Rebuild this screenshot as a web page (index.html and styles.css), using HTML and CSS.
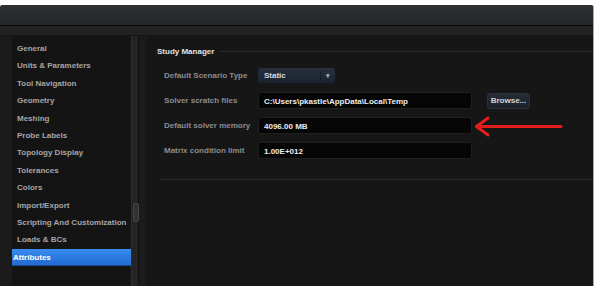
FILE: index.html
```html
<!DOCTYPE html>
<html lang="en">
<head>
  <meta charset="UTF-8" />
  <title>Options</title>
  <link rel="stylesheet" href="styles.css">
</head>
<body>
  <div class="window">
    <div class="titlebar"></div>
    <div class="toolstrip"></div>

    <div class="content">
      <ul class="sidebar">
        <li>General</li>
        <li>Units &amp; Parameters</li>
        <li>Tool Navigation</li>
        <li>Geometry</li>
        <li>Meshing</li>
        <li>Probe Labels</li>
        <li>Topology Display</li>
        <li>Tolerances</li>
        <li>Colors</li>
        <li>Import/Export</li>
        <li>Scripting And Customization</li>
        <li>Loads &amp; BCs</li>
        <li class="active">Attributes</li>
      </ul>

      <div class="splitter"><div class="grip"></div></div>

      <div class="main">
        <div class="legend"><span>Study Manager</span></div>

        <div class="form">
          <div class="row">
            <label>Default Scenario Type</label>
            <div class="select">
              <span class="select-value">Static</span>
              <span class="select-arrow">&#9662;</span>
            </div>
          </div>
          <div class="row">
            <label>Solver scratch files</label>
            <div class="field wide">C:\Users\pkastle\AppData\Local\Temp</div>
            <button class="browse">Browse...</button>
          </div>
          <div class="row">
            <label>Default solver memory</label>
            <div class="field wide">4096.00 MB</div>
          </div>
          <div class="row">
            <label>Matrix condition limit</label>
            <div class="field wide">1.00E+012</div>
          </div>
        </div>

        <div class="divider"></div>
      </div>
    </div>

    <!-- annotation arrow drawn over the screenshot -->
    <svg class="arrow" width="92" height="24" viewBox="0 0 92 24">
      <path d="M4 11.5 H88" stroke="#e21d1d" stroke-width="3" stroke-linecap="round" fill="none"/>
      <path d="M15 3 L3.5 11.5 L15 20" stroke="#e21d1d" stroke-width="3" stroke-linecap="round" stroke-linejoin="round" fill="none"/>
    </svg>
  </div>
</body>
</html>
```

FILE: styles.css
```css
body {
  margin: 0;
  padding: 0;
  background: #ffffff;
  font-family: 'Liberation Sans', Arial, sans-serif;
  font-size: 8px;
  font-weight: bold;
}

.window {
  position: relative;
  margin-top: 5px;
  width: 593px;
  height: 281px;
  border-right: 1px solid #a8a8a8;
  border-radius: 3px 3px 0 0;
  background: #1b1b1c;
  display: flex;
  flex-direction: column;
  overflow: hidden;
}

.titlebar {
  height: 20px;
  background: linear-gradient(to bottom, #2f3133, #232527);
  border-bottom: 1px solid #0b0b0b;
}

.toolstrip {
  height: 9px;
  background: #212224;
  border-bottom: 1px solid #141414;
}

.content {
  flex: 1;
  display: flex;
  padding-left: 12px;
}

.sidebar {
  list-style: none;
  margin: 0;
  padding: 4px 0 0;
  width: 119px;
  background: #141414;
  border-radius: 3px 3px 0 0;
  box-sizing: border-box;
}

.sidebar li {
  height: 17.4px;
  line-height: 17.4px;
  padding-left: 5px;
  color: #a6a6a6;
  white-space: nowrap;
}

.sidebar li.active {
  padding-left: 1px;
  color: #ffffff;
  background: linear-gradient(to bottom, #3a8cf0, #1f68cf);
  box-shadow: inset 0 -1px 0 #164a94;
}

.splitter {
  width: 15px;
  border-left: 1px solid #2e2e2e;
  box-sizing: border-box;
  background: linear-gradient(to right, #242424 0, #242424 6px, #0f0f0f 6px, #0f0f0f 7px, #1b1b1c 7px);
}

.grip {
  margin-top: 167px;
  width: 4px;
  height: 17px;
  margin-left: 1px;
  background: #333333;
  border: 1px solid #454545;
  border-radius: 2px;
}

.main {
  flex: 1;
  background: #161616;
  border-radius: 3px 0 0 0;
  padding: 10px 0 0 11px;
}

.legend {
  display: flex;
  align-items: center;
  height: 10px;
  color: #e2e2e2;
}

.legend::after {
  content: "";
  flex: 1;
  height: 1px;
  margin-left: 6px;
  background: #2b2b2b;
}

.form {
  margin-top: 7px;
  padding-left: 7px;
}

.row {
  display: flex;
  align-items: center;
  height: 25px;
}

.row label {
  width: 94px;
  color: #8c8c8c;
  white-space: nowrap;
}

.select {
  display: flex;
  align-items: center;
  width: 77px;
  height: 15px;
  border-radius: 3px;
  background: linear-gradient(to bottom, #27303c, #1b2330);
  box-sizing: border-box;
}

.select-value {
  flex: 1;
  padding-left: 6px;
  color: #d4dbe6;
}

.select-arrow {
  width: 14px;
  text-align: center;
  font-size: 7px;
  color: #a5adb8;
  border-left: 1px solid #151b24;
  line-height: 9px;
}

.field {
  height: 17px;
  line-height: 17px;
  padding-left: 5px;
  box-sizing: border-box;
  background: #060606;
  border: 1px solid #1f1f1f;
  border-radius: 2px;
  color: #ececec;
}

.field.wide {
  width: 214px;
}

.browse {
  margin-left: 15px;
  width: 43px;
  height: 16px;
  padding: 0;
  border: 1px solid #2b323c;
  border-radius: 3px;
  background: linear-gradient(to bottom, #252c36, #1b212a);
  color: #d2d6dc;
  font-family: inherit;
  font-size: 8px;
  font-weight: bold;
}

.divider {
  margin: 16px 0 0 3px;
  height: 1px;
  background: #2a2a2a;
}

.arrow {
  position: absolute;
  left: 473px;
  top: 110px;
}
```
